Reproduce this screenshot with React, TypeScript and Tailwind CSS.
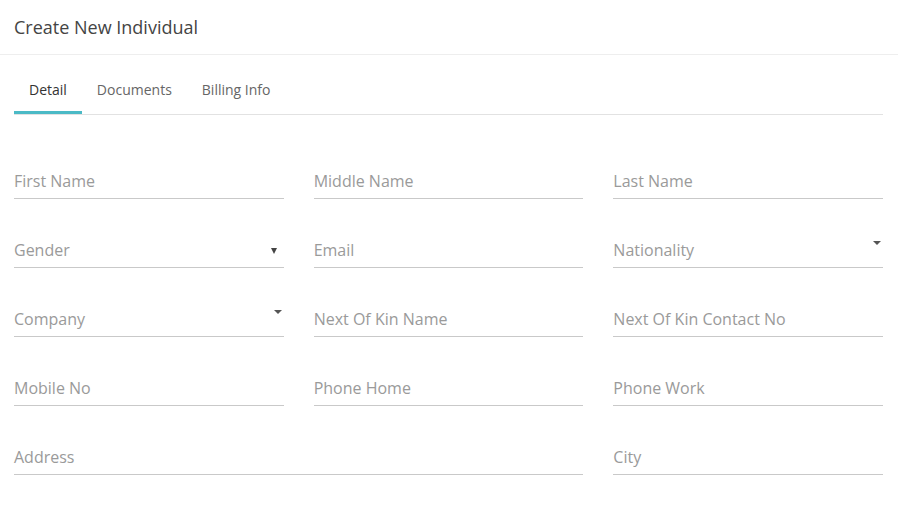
import React from 'react'

type Field = {
  label: string
  span?: boolean
  caret?: 'small' | 'mat'
}

const fields: Field[] = [
  { label: 'First Name' },
  { label: 'Middle Name' },
  { label: 'Last Name' },
  { label: 'Gender', caret: 'small' },
  { label: 'Email' },
  { label: 'Nationality', caret: 'mat' },
  { label: 'Company', caret: 'mat' },
  { label: 'Next Of Kin Name' },
  { label: 'Next Of Kin Contact No' },
  { label: 'Mobile No' },
  { label: 'Phone Home' },
  { label: 'Phone Work' },
  { label: 'Address', span: true },
  { label: 'City' },
]

const tabs = ['Detail', 'Documents', 'Billing Info']

function FormField({ field }: { field: Field }) {
  return (
    <div
      className={`relative h-[40px] flex items-end pb-[5px] border-b border-[#c9c9c9] ${
        field.span ? 'col-span-2' : ''
      }`}
    >
      <span className="text-[16px] leading-[24px] text-[#9a9a9a]">{field.label}</span>
      {/* select arrows */}
      {field.caret === 'small' && (
        <span className="absolute right-[7px] top-[20px] w-0 h-0 border-l-[3px] border-r-[3px] border-t-[6px] border-l-transparent border-r-transparent border-t-[#444]" />
      )}
      {field.caret === 'mat' && (
        <span className="absolute right-[2px] top-[13px] w-0 h-0 border-l-[4px] border-r-[4px] border-t-[4px] border-l-transparent border-r-transparent border-t-[#555]" />
      )}
    </div>
  )
}

export default function App() {
  return (
    <div className="w-[898px] h-[516px] bg-white overflow-hidden font-['Open_Sans','Noto_Sans',sans-serif]">
      {/* Header */}
      <div className="h-[55px] px-[14px] flex items-center border-b border-[#eeeeee]">
        <h1 className="text-[18px] text-[#444] font-normal">Create New Individual</h1>
      </div>

      {/* Tabs */}
      <div className="ml-[14px] mt-[11px] mr-[15px] flex border-b border-[#e2e2e2]">
        {tabs.map((tab, i) => (
          <div
            key={tab}
            className={`relative h-[48px] pb-[1px] px-[15px] flex items-center text-[14px] ${
              i === 0 ? 'text-[#333]' : 'text-[#666]'
            }`}
          >
            {tab}
            {i === 0 && <span className="absolute left-0 right-0 bottom-0 h-[3px] bg-[#4bbac6]" />}
          </div>
        ))}
      </div>

      {/* Form */}
      <div className="grid grid-cols-3 gap-x-[30px] gap-y-[29px] pl-[14px] pr-[15px] mt-[44px]">
        {fields.map((f) => (
          <FormField key={f.label} field={f} />
        ))}
      </div>
    </div>
  )
}
